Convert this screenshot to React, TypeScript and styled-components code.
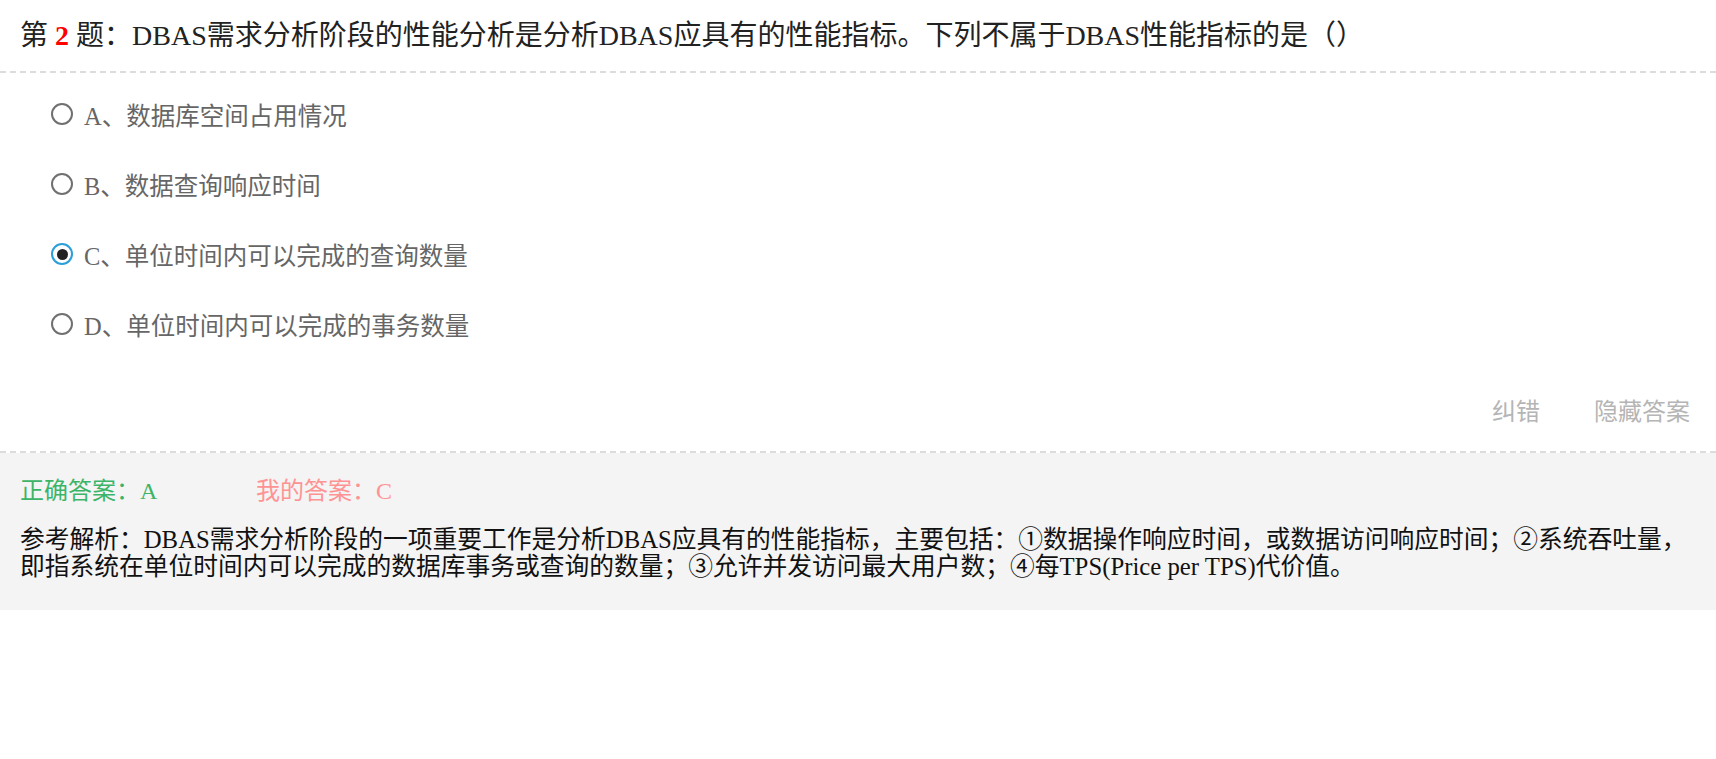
import React from "react";
import styled, { createGlobalStyle } from "styled-components";

const GlobalStyle = createGlobalStyle`
  html, body {
    margin: 0;
    padding: 0;
    background: #ffffff;
  }
  body {
    font-family: "Liberation Serif", "Noto Sans CJK SC", serif;
  }
  * { box-sizing: border-box; }
`;

const Page = styled.div`
  width: 100%;
  display: flex;
  flex-direction: column;
`;

const TitleBar = styled.div`
  padding: 16px 20px 15px 20px;
  border-bottom: 2px dashed #dcdcdc;
`;

const Title = styled.h1`
  margin: 0;
  font-size: 28px;
  line-height: 40px;
  font-weight: normal;
  color: #222222;
`;

const QNum = styled.span`
  color: #ff0000;
  font-weight: bold;
`;

const OptionList = styled.div`
  display: flex;
  flex-direction: column;
  padding: 6px 0 0 51px;
`;

const OptionRow = styled.label`
  display: flex;
  align-items: center;
  gap: 11px;
  height: 70px;
  font-size: 24.5px;
  color: #666666;
  cursor: pointer;
`;

const Radio = styled.span<{ $checked?: boolean }>`
  width: 22px;
  height: 22px;
  border-radius: 50%;
  border: 2px solid ${(p) => (p.$checked ? "#2a9fd8" : "#707070")};
  display: flex;
  align-items: center;
  justify-content: center;
  flex-shrink: 0;
  &::after {
    content: "";
    display: ${(p) => (p.$checked ? "block" : "none")};
    width: 11px;
    height: 11px;
    border-radius: 50%;
    background: #222222;
  }
`;

const Actions = styled.div`
  height: 94px;
  padding: 8px 26px 0 0;
  display: flex;
  justify-content: flex-end;
  align-items: center;
  gap: 54px;
  border-bottom: 2px dashed #dcdcdc;
`;

const ActionLink = styled.span`
  font-size: 24px;
  color: #b5b5b5;
  cursor: pointer;
`;

const AnswerPanel = styled.div`
  background: #f4f4f4;
  padding: 23px 20px 30px 20px;
  display: flex;
  flex-direction: column;
  gap: 20px;
`;

const AnswerLine = styled.div`
  display: flex;
  font-size: 24px;
  line-height: 30px;
`;

const AnswerTag = styled.span<{ $tone: "right" | "mine" }>`
  color: ${(p) => (p.$tone === "right" ? "#3cb468" : "#ff9393")};
  width: ${(p) => (p.$tone === "right" ? "236px" : "auto")};
`;

const Explain = styled.div`
  font-size: 24.75px;
  line-height: 27px;
  color: #111111;
`;

const options = [
  { key: "A", text: "数据库空间占用情况" },
  { key: "B", text: "数据查询响应时间" },
  { key: "C", text: "单位时间内可以完成的查询数量" },
  { key: "D", text: "单位时间内可以完成的事务数量" },
];

export default function App() {
  const selected = "C";
  return (
    <>
      <GlobalStyle />
      <Page>
        <TitleBar>
          <Title>
            第 <QNum>2</QNum> 题：DBAS需求分析阶段的性能分析是分析DBAS应具有的性能指标。下列不属于DBAS性能指标的是（）
          </Title>
        </TitleBar>
        <OptionList>
          {options.map((o) => (
            <OptionRow key={o.key}>
              <Radio $checked={o.key === selected} />
              <span>
                {o.key}、{o.text}
              </span>
            </OptionRow>
          ))}
        </OptionList>
        <Actions>
          <ActionLink>纠错</ActionLink>
          <ActionLink>隐藏答案</ActionLink>
        </Actions>
        <AnswerPanel>
          <AnswerLine>
            <AnswerTag $tone="right">正确答案：A</AnswerTag>
            <AnswerTag $tone="mine">我的答案：C</AnswerTag>
          </AnswerLine>
          <Explain>
            参考解析：DBAS需求分析阶段的一项重要工作是分析DBAS应具有的性能指标，主要包括：①数据操作响应时间，或数据访问响应时间；②系统吞吐量，即指系统在单位时间内可以完成的数据库事务或查询的数量；③允许并发访问最大用户数；④每TPS(Price per TPS)代价值。
          </Explain>
        </AnswerPanel>
      </Page>
    </>
  );
}
